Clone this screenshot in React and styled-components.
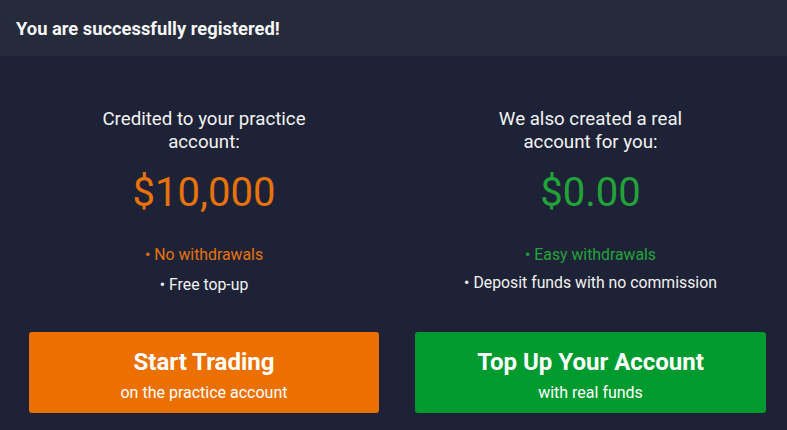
import React from 'react'
import styled, { createGlobalStyle } from 'styled-components'

const GlobalStyle = createGlobalStyle`
  html, body {
    margin: 0;
    padding: 0;
    background: #1e2236;
    font-family: Roboto, "Liberation Sans", sans-serif;
  }
`

const Page = styled.div`
  width: 787px;
  height: 430px;
  background: #1e2236;
  overflow: hidden;
`

const Header = styled.header`
  height: 56px;
  background: #262b3c;
  display: flex;
  align-items: center;
  padding-left: 16px;
  color: #f7f7f7;
  font-size: 18.35px;
  font-weight: 700;
`

const Columns = styled.div`
  display: grid;
  grid-template-columns: 350px 351px;
  column-gap: 36px;
  padding: 52px 0 0 29px;
`

const Column = styled.div`
  display: flex;
  flex-direction: column;
  align-items: center;
  text-align: center;
`

const Caption = styled.div`
  color: #f2f2f2;
  font-size: 18.7px;
  line-height: 23px;
  width: ${(p) => p.$width}px;
`

const Amount = styled.div`
  margin-top: 14px;
  font-size: 40px;
  line-height: 50px;
  color: ${(p) => p.$color};
`

const Perks = styled.ul`
  list-style: none;
  margin: 27px 0 0;
  padding: 0;
  display: flex;
  flex-direction: column;
  gap: ${(p) => p.$gap}px;
  font-size: 15.8px;
  line-height: 19px;
`

const Perk = styled.li`
  color: ${(p) => p.$color || '#f2f2f2'};
  &::before {
    content: '•';
    margin-right: 4px;
  }
`

const Action = styled.button`
  margin-top: ${(p) => p.$offset}px;
  width: 100%;
  height: 81px;
  border: none;
  border-radius: 3px;
  background: ${(p) => p.$bg};
  color: #ffffff;
  font-family: inherit;
  display: flex;
  flex-direction: column;
  align-items: center;
  justify-content: center;
  gap: 7px;
  padding: 4px 0 0;
  cursor: pointer;
`

const ActionTitle = styled.span`
  font-size: 24px;
  font-weight: 700;
  line-height: 28px;
`

const ActionSub = styled.span`
  font-size: 16px;
  line-height: 19px;
`

const accounts = [
  {
    caption: 'Credited to your practice account:',
    captionWidth: 230,
    amount: '$10,000',
    color: '#e8720c',
    perks: ['No withdrawals', 'Free top-up'],
    gap: 11,
    offset: 38,
    button: 'Start Trading',
    sub: 'on the practice account',
    bg: '#ec7000',
  },
  {
    caption: 'We also created a real account for you:',
    captionWidth: 200,
    amount: '$0.00',
    color: '#22a33a',
    perks: ['Easy withdrawals', 'Deposit funds with no commission'],
    gap: 9,
    offset: 40,
    button: 'Top Up Your Account',
    sub: 'with real funds',
    bg: '#009b2e',
  },
]

export default function App() {
  return (
    <Page>
      <GlobalStyle />
      <Header>You are successfully registered!</Header>
      <Columns>
        {accounts.map((a) => (
          <Column key={a.button}>
            <Caption $width={a.captionWidth}>{a.caption}</Caption>
            <Amount $color={a.color}>{a.amount}</Amount>
            <Perks $gap={a.gap}>
              <Perk $color={a.color}>{a.perks[0]}</Perk>
              <Perk>{a.perks[1]}</Perk>
            </Perks>
            <Action $bg={a.bg} $offset={a.offset}>
              <ActionTitle>{a.button}</ActionTitle>
              <ActionSub>{a.sub}</ActionSub>
            </Action>
          </Column>
        ))}
      </Columns>
    </Page>
  )
}
